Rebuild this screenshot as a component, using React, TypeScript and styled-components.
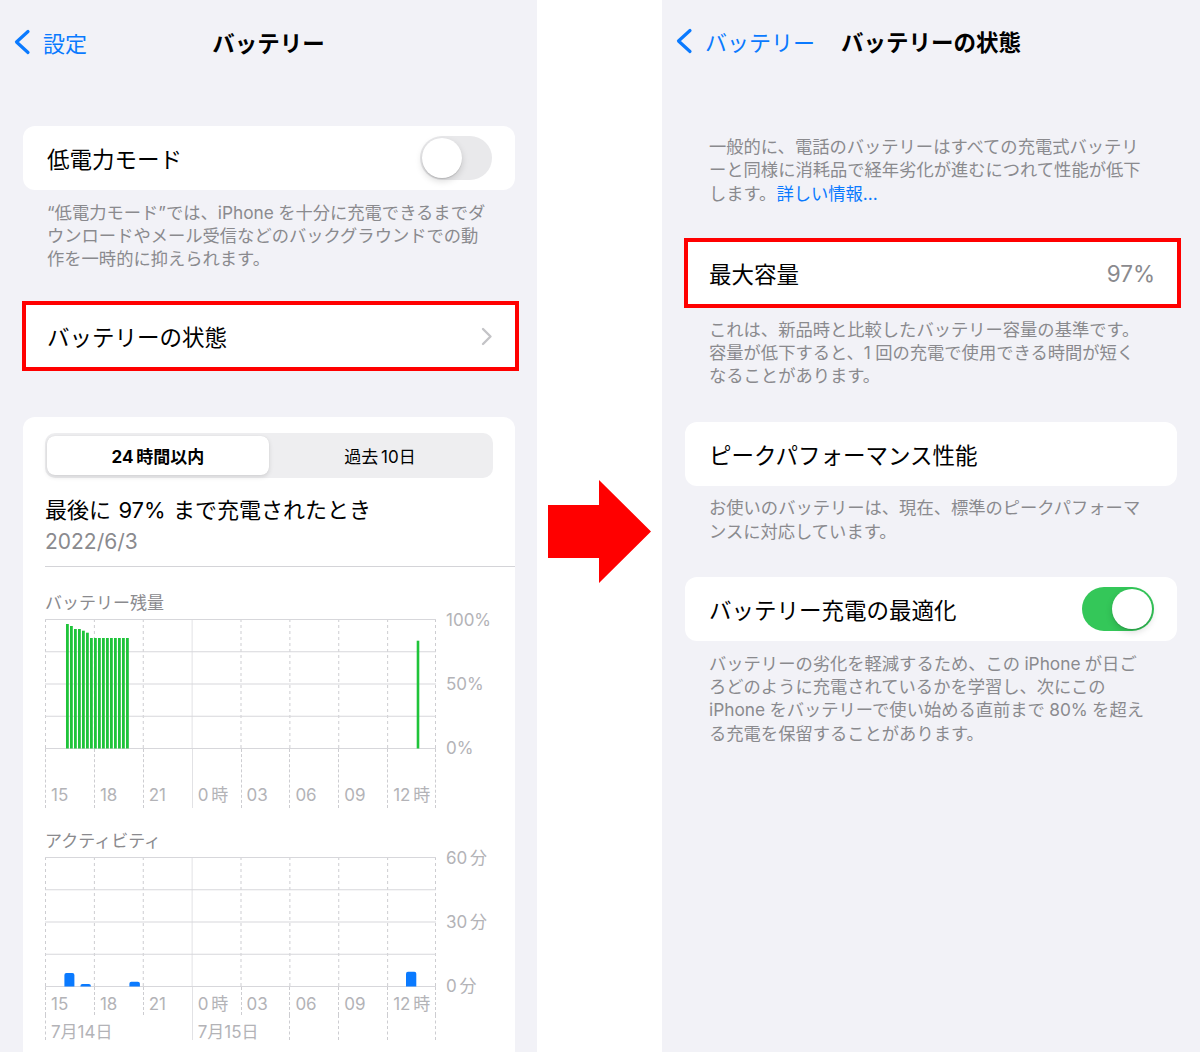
import React from "react";
import styled, { createGlobalStyle, css } from "styled-components";

const BG = "#f2f2f7";
const BLUE = "#0a7aff";
const GRAY = "#8a8a8e";
const AXIS = "#b3b3b7";
const GRID = "#d7d7db";
const DASH = "#cdcdd1";
const FONT = `"Inter", "Noto Sans CJK JP", sans-serif`;

// iOS puts a little air between kana/kanji and latin runs
const SP = "\u2005";
const THIN = "\u2006";

const GlobalStyle = createGlobalStyle`
  html, body {
    margin: 0;
    padding: 0;
    background: #fff;
  }
  body {
    font-family: ${FONT};
    overflow: hidden;
    -webkit-font-smoothing: antialiased;
  }
`;

const Page = styled.div`
  display: flex;
  width: 1200px;
  height: 1052px;
  overflow: hidden;
`;

const Screen = styled.section<{ $width: number }>`
  width: ${(p) => p.$width}px;
  flex: none;
  height: 100%;
  background: ${BG};
  overflow: hidden;
  display: flex;
  flex-direction: column;
`;

const Body = styled.div<{ $right: number }>`
  padding: 0 ${(p) => p.$right}px 0 23px;
  display: flex;
  flex-direction: column;
`;

const ArrowColumn = styled.div`
  width: 125px;
  flex: none;
  background: #fff;
  display: flex;
  align-items: center;
  justify-content: center;
  padding-top: 10px;
  box-sizing: border-box;
`;

/* nav bar */
const NavBar = styled.header<{ $height: number }>`
  height: ${(p) => p.$height}px;
  flex: none;
  display: grid;
  grid-template-columns: 1fr auto 1fr;
  align-items: center;
`;

const BackButton = styled.div`
  display: flex;
  align-items: center;
  gap: 12px;
  padding-left: 13px;
  color: ${BLUE};
  font-size: 22px;
  white-space: nowrap;
`;

const NavTitle = styled.div`
  font-size: 22.5px;
  font-weight: 700;
  color: #000;
  white-space: nowrap;
`;

/* list cells */
const Card = styled.div<{ $top: number; $marked?: boolean }>`
  margin-top: ${(p) => p.$top}px;
  height: 64px;
  flex: none;
  box-sizing: border-box;
  background: #fff;
  border-radius: 12px;
  display: flex;
  align-items: center;
  justify-content: space-between;
  padding: 0 23px 0 24px;
  ${(p) =>
    p.$marked &&
    css`
      height: 70px;
      border: 4px solid #ff0000;
      border-radius: 0;
      margin-left: -1px;
      margin-right: -4px;
      padding: 0 22px 0 21px;
    `}
`;

const CellLabel = styled.span`
  font-size: 22.5px;
  color: #000;
  white-space: nowrap;
`;

const CellValue = styled.span`
  font-size: 22.5px;
  color: ${GRAY};
`;

const Footer = styled.p<{ $top?: number }>`
  margin: 0;
  padding: ${(p) => p.$top ?? 10.5}px 24px 0;
  font-size: 17.3px;
  line-height: 23.3px;
  color: ${GRAY};
  white-space: nowrap;
`;

const Link = styled.span`
  color: ${BLUE};
`;

const Switch = styled.div<{ $on?: boolean }>`
  width: 72px;
  height: 44px;
  flex: none;
  box-sizing: border-box;
  border-radius: 22px;
  padding: 2px;
  display: flex;
  justify-content: ${(p) => (p.$on ? "flex-end" : "flex-start")};
  background: ${(p) => (p.$on ? "#34c759" : "#e9e9eb")};
`;

const Knob = styled.div`
  width: 40px;
  height: 40px;
  border-radius: 50%;
  background: #fff;
  box-shadow: 0 3px 7px rgba(0, 0, 0, 0.15), 0 1px 1px rgba(0, 0, 0, 0.12);
`;

/* usage card */
const UsageCard = styled.div`
  margin-top: 46px;
  flex: none;
  background: #fff;
  border-radius: 12px 12px 0 0;
  padding: 16px 0 60px 22px;
`;

const Segmented = styled.div`
  margin-right: 22px;
  height: 45px;
  box-sizing: border-box;
  padding: 3px 2px;
  border-radius: 10px;
  background: #eeeef0;
  display: grid;
  grid-template-columns: 1fr 1fr;
`;

const Segment = styled.div<{ $active?: boolean }>`
  display: flex;
  align-items: center;
  justify-content: center;
  border-radius: 8px;
  font-size: 17px;
  color: #000;
  white-space: pre;
  ${(p) =>
    p.$active &&
    css`
      background: #fff;
      font-weight: 700;
      box-shadow: 0 2px 5px rgba(0, 0, 0, 0.12), 0 0 1px rgba(0, 0, 0, 0.1);
    `}
`;

const Heading = styled.div`
  margin-top: 16px;
  font-size: 22px;
  line-height: 32px;
  color: #000;
  white-space: nowrap;
`;

const DateText = styled.div`
  font-size: 21px;
  line-height: 32px;
  color: ${GRAY};
`;

const Separator = styled.div`
  margin-top: 8px;
  height: 1px;
  background: #d4d4d8;
`;

const ChartTitle = styled.div<{ $top: number }>`
  margin-top: ${(p) => p.$top}px;
  font-size: 17px;
  line-height: 24px;
  color: ${GRAY};
`;

const ChartGrid = styled.div`
  margin-top: 4px;
  display: grid;
  grid-template-columns: 391px auto;
  column-gap: 10px;
`;

const YAxis = styled.div`
  height: 150px;
  margin: -10px 0 -10px;
  display: flex;
  flex-direction: column;
  justify-content: space-between;
  font-size: 17px;
  line-height: 22px;
  color: ${AXIS};
  white-space: nowrap;
`;

const AxisRow = styled.div`
  width: 391px;
  display: grid;
  grid-template-columns: repeat(8, minmax(0, 1fr));
`;

type Line = "dashed" | "solid" | "none";

const AxisCell = styled.div<{ $line: Line; $last?: boolean; $pad: number; $height: number }>`
  box-sizing: border-box;
  height: ${(p) => p.$height}px;
  padding: ${(p) => p.$pad}px 0 0 5px;
  font-size: 17px;
  line-height: 22px;
  color: ${AXIS};
  white-space: nowrap;
  border-left: 1px ${(p) => (p.$line === "solid" ? "solid #e2e2e5" : p.$line === "dashed" ? `dashed ${DASH}` : "solid transparent")};
  ${(p) => p.$last && css`border-right: 1px dashed ${DASH};`}
`;

const Chevron = () => (
  <svg width="18" height="26" viewBox="0 0 18 26" fill="none">
    <path d="M15 2.5 L3.5 13 L15 23.5" stroke={BLUE} strokeWidth="3.2" strokeLinecap="round" strokeLinejoin="round" />
  </svg>
);

const Disclosure = () => (
  <svg width="12" height="19" viewBox="0 0 12 19" fill="none">
    <path d="M2 2 L9.5 9.5 L2 17" stroke="#c4c4c7" strokeWidth="2.4" strokeLinecap="round" strokeLinejoin="round" />
  </svg>
);

const HOURS = ["15", "18", "21", `0${THIN}時`, "03", "06", "09", `12${THIN}時`];
const COL = 391 / 8;
const ROWS = [0.5, 32.75, 65, 97.25, 129.5];

const PlotGrid = () => (
  <>
    {Array.from({ length: 9 }, (_, i) => {
      const x = Math.min(i * COL + 0.5, 390.5);
      return i === 3 ? (
        <line key={i} x1={x} x2={x} y1={0} y2={130} stroke="#e2e2e5" strokeWidth="1" />
      ) : (
        <line key={i} x1={x} x2={x} y1={0} y2={130} stroke={DASH} strokeWidth="1" strokeDasharray="3 3" />
      );
    })}
    {ROWS.map((y) => (
      <line key={y} x1={0} x2={391} y1={y} y2={y} stroke={GRID} strokeWidth="1.2" />
    ))}
  </>
);

const greenTops = [5, 7, 10, 10, 11.7, 13.7, 19, 19, 19, 19, 19, 19, 19, 19, 19, 19];

const BatteryPlot = () => (
  <svg width="391" height="130" viewBox="0 0 391 130">
    <PlotGrid />
    {greenTops.map((top, i) => (
      <rect key={i} x={21 + i * 4} y={top} width={2.8} height={129.5 - top} fill="#1fc43a" />
    ))}
    <rect x={371.7} y={21.7} width={2.6} height={107.8} fill="#1fc43a" />
  </svg>
);

const topRounded = (x: number, y: number, w: number, h: number, r: number) => {
  const rr = Math.min(r, h, w / 2);
  return `M${x},${y + h} L${x},${y + rr} Q${x},${y} ${x + rr},${y} L${x + w - rr},${y} Q${x + w},${y} ${x + w},${y + rr} L${x + w},${y + h} Z`;
};

const blueBars = [
  [19.4, 116, 10, 13.5],
  [35.4, 127, 10.5, 2.5],
  [84.4, 124.7, 10.5, 4.8],
  [361, 114.7, 10.3, 14.8],
];

const ActivityPlot = () => (
  <svg width="391" height="130" viewBox="0 0 391 130">
    <PlotGrid />
    {blueBars.map(([x, y, w, h], i) => (
      <path key={i} d={topRounded(x, y, w, h, 2)} fill="#0a7aff" />
    ))}
  </svg>
);

const lineFor = (i: number): Line => (i === 3 ? "solid" : "dashed");

const HourAxis = ({ pad, height }: { pad: number; height: number }) => (
  <AxisRow>
    {HOURS.map((h, i) => (
      <AxisCell key={h} $line={lineFor(i)} $last={i === 7} $pad={pad} $height={height}>
        {h}
      </AxisCell>
    ))}
  </AxisRow>
);

const DATES: Record<number, string> = { 0: "7月14日", 3: "7月15日" };
const HIDDEN = [1, 2, 4];

const DateAxis = () => (
  <AxisRow>
    {HOURS.map((h, i) => (
      <AxisCell
        key={h}
        $line={HIDDEN.includes(i) ? "none" : lineFor(i)}
        $last={i === 7}
        $pad={6}
        $height={25}
      >
        {DATES[i] ?? ""}
      </AxisCell>
    ))}
  </AxisRow>
);

const Arrow = () => (
  <svg width="103" height="103" viewBox="0 0 103 103">
    <polygon points="0,25 51,25 51,0 103,51.5 51,103 51,78 0,78" fill="#ff0000" />
  </svg>
);

const BatteryScreen = () => (
  <Screen $width={537}>
    <NavBar $height={84}>
      <BackButton>
        <Chevron />
        設定
      </BackButton>
      <NavTitle>バッテリー</NavTitle>
      <span />
    </NavBar>
    <Body $right={22}>
      <Card $top={42}>
        <CellLabel>低電力モード</CellLabel>
        <Switch>
          <Knob />
        </Switch>
      </Card>
      <Footer>
        “低電力モード”では、iPhone{SP}を十分に充電できるまでダ
        <br />
        ウンロードやメール受信などのバックグラウンドでの動
        <br />
        作を一時的に抑えられます。
      </Footer>
      <Card $top={31} $marked>
        <CellLabel>バッテリーの状態</CellLabel>
        <Disclosure />
      </Card>
      <UsageCard>
        <Segmented>
          <Segment $active>{`24${THIN}時間以内`}</Segment>
          <Segment>{`過去${THIN}10日`}</Segment>
        </Segmented>
        <Heading>最後に{"\u2004"}97%{"\u2004"}まで充電されたとき</Heading>
        <DateText>2022/6/3</DateText>
        <Separator />
        <ChartTitle $top={24}>バッテリー残量</ChartTitle>
        <ChartGrid>
          <BatteryPlot />
          <YAxis>
            <span>100%</span>
            <span>50%</span>
            <span>0%</span>
          </YAxis>
        </ChartGrid>
        <HourAxis pad={35} height={59} />
        <ChartTitle $top={21}>アクティビティ</ChartTitle>
        <ChartGrid>
          <ActivityPlot />
          <YAxis>
            <span>60{THIN}分</span>
            <span>30{THIN}分</span>
            <span>0{THIN}分</span>
          </YAxis>
        </ChartGrid>
        <HourAxis pad={6} height={28} />
        <DateAxis />
      </UsageCard>
    </Body>
  </Screen>
);

const HealthScreen = () => (
  <Screen $width={538}>
    <NavBar $height={82}>
      <BackButton>
        <Chevron />
        バッテリー
      </BackButton>
      <NavTitle>バッテリーの状態</NavTitle>
      <span />
    </NavBar>
    <Body $right={23}>
      <Footer $top={53}>
        一般的に、電話のバッテリーはすべての充電式バッテリ
        <br />
        ーと同様に消耗品で経年劣化が進むにつれて性能が低下
        <br />
        します。<Link>詳しい情報...</Link>
      </Footer>
      <Card $top={33.5} $marked>
        <CellLabel>最大容量</CellLabel>
        <CellValue>97%</CellValue>
      </Card>
      <Footer $top={9.5}>
        これは、新品時と比較したバッテリー容量の基準です。
        <br />
        容量が低下すると、1{SP}回の充電で使用できる時間が短く
        <br />
        なることがあります。
      </Footer>
      <Card $top={34}>
        <CellLabel>ピークパフォーマンス性能</CellLabel>
      </Card>
      <Footer>
        お使いのバッテリーは、現在、標準のピークパフォーマ
        <br />
        ンスに対応しています。
      </Footer>
      <Card $top={34.5}>
        <CellLabel>バッテリー充電の最適化</CellLabel>
        <Switch $on>
          <Knob />
        </Switch>
      </Card>
      <Footer>
        バッテリーの劣化を軽減するため、この{SP}iPhone{SP}が日ご
        <br />
        ろどのように充電されているかを学習し、次にこの
        <br />
        iPhone{SP}をバッテリーで使い始める直前まで{SP}80%{SP}を超え
        <br />
        る充電を保留することがあります。
      </Footer>
    </Body>
  </Screen>
);

export default function App() {
  return (
    <>
      <GlobalStyle />
      <Page>
        <BatteryScreen />
        <ArrowColumn>
          <Arrow />
        </ArrowColumn>
        <HealthScreen />
      </Page>
    </>
  );
}
